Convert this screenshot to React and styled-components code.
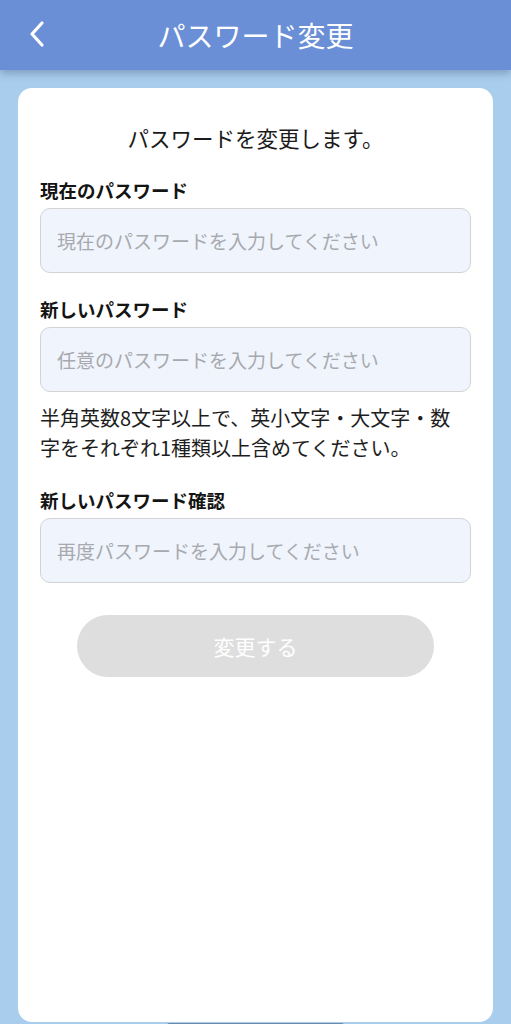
import React from "react";
import styled, { createGlobalStyle } from "styled-components";

const Global = createGlobalStyle`
  html, body { margin: 0; padding: 0; background: #a9cdec; }
  body { font-family: "Noto Sans CJK JP", "Noto Sans", sans-serif; }
  * { box-sizing: border-box; }
`;

const Screen = styled.div`
  width: 511px;
  height: 1024px;
  display: flex;
  flex-direction: column;
  background: #a9cdec;
  overflow: hidden;
  position: relative;
`;

const Header = styled.header`
  position: relative;
  z-index: 1;
  height: 70px;
  flex: none;
  background: #6a8fd6;
  box-shadow: 0 3px 8px rgba(40, 60, 100, 0.35);
  display: flex;
  align-items: center;
  justify-content: center;
`;

const BackButton = styled.button`
  position: absolute;
  left: 22px;
  top: 17px;
  width: 30px;
  height: 34px;
  padding: 0;
  border: none;
  background: none;
  display: flex;
  align-items: center;
  justify-content: center;
`;

const Title = styled.h1`
  margin: 0;
  color: #ffffff;
  font-size: 28px;
  font-weight: 400;
  letter-spacing: 0;
  line-height: 1;
`;

const Body = styled.main`
  flex: 1;
  padding: 18px 18px 2px;
  display: flex;
`;

const Card = styled.section`
  flex: 1;
  background: #ffffff;
  border-radius: 14px;
  padding: 34px 22px 0;
  display: flex;
  flex-direction: column;
`;

const Lead = styled.p`
  margin: 0 0 23px;
  text-align: center;
  font-size: 21.5px;
  line-height: 32px;
  color: #1b1b1b;
`;

const Field = styled.div`
  display: flex;
  flex-direction: column;
  gap: 5px;
  margin-top: ${(p) => p.$top || 0}px;
`;

const Label = styled.label`
  font-size: 18.5px;
  font-weight: 700;
  line-height: 26px;
  color: #141414;
`;

const Input = styled.input`
  height: 65px;
  width: 100%;
  padding: 0 16px;
  border: 1px solid #d3d3d6;
  border-radius: 10px;
  background: #eff4fd;
  font-family: "Noto Sans CJK JP", "Noto Sans", sans-serif;
  font-size: 19px;
  color: #222;
  outline: none;
  &::placeholder { color: #a8a9ad; }
`;

const Hint = styled.p`
  margin: 11px 0 0;
  max-width: 422px;
  font-size: 20px;
  line-height: 30px;
  color: #1e1e1e;
`;

const Submit = styled.button`
  align-self: center;
  margin-top: 32px;
  width: 357px;
  height: 62px;
  border: none;
  border-radius: 31px;
  background: #dedede;
  color: #ffffff;
  font-family: "Noto Sans CJK JP", "Noto Sans", sans-serif;
  font-size: 21px;
  font-weight: 400;
`;

const HomeIndicator = styled.div`
  position: absolute;
  left: 167px;
  bottom: -4px;
  width: 177px;
  height: 5px;
  border-radius: 3px;
  background: #6a8aa6;
`;

export default function App() {
  return (
    <>
      <Global />
      <Screen>
        <Header>
          <BackButton aria-label="戻る">
            <svg width="18" height="28" viewBox="0 0 18 28" fill="none">
              <path d="M14 3 L4 14 L14 25" stroke="#fff" strokeWidth="3.2" strokeLinecap="round" strokeLinejoin="round" />
            </svg>
          </BackButton>
          <Title>パスワード変更</Title>
        </Header>
        <Body>
          <Card>
            <Lead>パスワードを変更します。</Lead>
            <Field>
              <Label>現在のパスワード</Label>
              <Input type="password" placeholder="現在のパスワードを入力してください" />
            </Field>
            <Field $top={23}>
              <Label>新しいパスワード</Label>
              <Input type="password" placeholder="任意のパスワードを入力してください" />
            </Field>
            <Hint>半角英数8文字以上で、英小文字・大文字・数字をそれぞれ1種類以上含めてください。</Hint>
            <Field $top={24}>
              <Label>新しいパスワード確認</Label>
              <Input type="password" placeholder="再度パスワードを入力してください" />
            </Field>
            <Submit disabled>変更する</Submit>
          </Card>
        </Body>
        <HomeIndicator />
      </Screen>
    </>
  );
}
